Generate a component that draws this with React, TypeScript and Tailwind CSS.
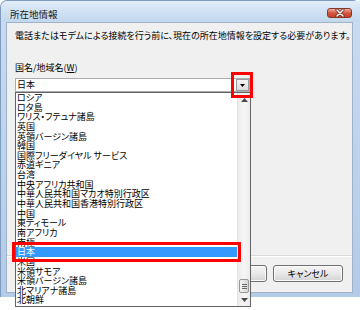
import React from "react";

const items = [
  "ロシア",
  "ロタ島",
  "ワリス・フテュナ諸島",
  "英国",
  "英領バージン諸島",
  "韓国",
  "国際フリーダイヤル サービス",
  "赤道ギニア",
  "台湾",
  "中央アフリカ共和国",
  "中華人民共和国マカオ特別行政区",
  "中華人民共和国香港特別行政区",
  "中国",
  "東ティモール",
  "南アフリカ",
  "南極",
  "日本",
  "米国",
  "米領サモア",
  "米領バージン諸島",
  "北マリアナ諸島",
  "北朝鮮",
];

function Tri({ up }: { up?: boolean }) {
  return (
    <svg width="7" height="4" viewBox="0 0 7 4">
      {up ? (
        <polygon points="0,4 7,4 3.5,0" fill="#4a4a4a" />
      ) : (
        <polygon points="0,0 7,0 3.5,4" fill="#4a4a4a" />
      )}
    </svg>
  );
}

export default function App() {
  return (
    <div className="relative w-[360px] h-[310px] overflow-hidden bg-white text-black font-['Noto_Sans_CJK_JP','Noto_Sans',sans-serif] [font-feature-settings:'palt']">
      {/* window */}
      <div className="flex flex-col w-[360px] h-[297px] rounded-t-[7px] border-l border-t border-[#7f9bbd] bg-gradient-to-b from-[#c9dcf1] to-[#b2cbe8]">
        {/* title bar */}
        <div className="flex h-[21px] shrink-0 items-start justify-between rounded-tl-[6px] bg-gradient-to-b from-[#e2edf8] via-[#d0e1f3] to-[#c3d8ee] pr-[8px]">
          <div className="mt-[7px] pl-[9px] text-[9.5px] leading-[12px] text-[#1a1a1a]">所在地情報</div>
          <div className="mt-[7px] flex h-[10px] w-[25px] items-center justify-center rounded-[3px] border border-[#8a3526] bg-gradient-to-b from-[#eab0a3] via-[#d5533c] to-[#c9452e]">
            <svg width="10" height="8" viewBox="0 0 10 8">
              <path d="M2 1 L8 7 M8 1 L2 7" stroke="#5a1c12" strokeWidth="3" strokeLinecap="round" />
              <path d="M2 1 L8 7 M8 1 L2 7" stroke="#ffffff" strokeWidth="1.6" strokeLinecap="round" />
            </svg>
          </div>
        </div>
        {/* client area */}
        <div className="ml-[5px] mr-[7px] flex h-[271px] shrink-0 flex-col border border-[#9fb2c8] bg-[#f0f0f0]">
          <p className="whitespace-nowrap pl-[8px] pt-[6px] text-[9px] leading-[13px]">
            電話またはモデムによる接続を行う前に、現在の所在地情報を設定する必要があります。
          </p>
          <div className="mt-[20px] pl-[8px] text-[9px] leading-[12px]">
            国名/地域名(<span className="underline">W</span>)
          </div>
          <div className="ml-[8px] mt-[4px] flex h-[14px] w-[235px] items-center justify-between border border-[#abadb3] bg-white">
            <span className="pl-[1px] text-[9px] leading-[12px]">日本</span>
            <div className="flex h-[12px] w-[13px] items-center justify-center border border-[#9a9a9a] bg-gradient-to-b from-[#f4f4f4] to-[#dcdcdc]">
              <svg width="5" height="3" viewBox="0 0 5 3">
                <polygon points="0,0 5,0 2.5,3" fill="#000" />
              </svg>
            </div>
          </div>
          <div className="mt-auto">
            <div className="h-px bg-[#d9d9d9]" />
            <div className="h-px bg-white" />
            <div className="mt-[8px] flex justify-end gap-[6px] pb-[10px] pr-[9px]">
              <div className="flex h-[17px] w-[70px] items-center justify-center rounded-[3px] border border-[#707070] bg-gradient-to-b from-[#f4f4f4] via-[#e9e9e9] to-[#d3d3d3] text-[9px] shadow-[inset_0_0_0_1px_#fbfbfb]">
                OK
              </div>
              <div className="flex h-[17px] w-[70px] items-center justify-center rounded-[3px] border border-[#707070] bg-gradient-to-b from-[#f4f4f4] via-[#e9e9e9] to-[#d3d3d3] text-[9px] shadow-[inset_0_0_0_1px_#fbfbfb]">
                キャンセル
              </div>
            </div>
          </div>
        </div>
      </div>

      {/* dropdown list popup */}
      <div className="absolute left-[15px] top-[92px] flex h-[215px] w-[236px] border border-[#646464] bg-white">
        <div className="flex flex-1 flex-col">
          {items.map((t, i) => (
            <div
              key={t}
              className={
                "h-[9.65px] shrink-0 whitespace-nowrap pl-[1px] text-[9px] leading-[9.65px] " +
                (i === 16 ? "bg-[#3399ff] text-white" : "")
              }
            >
              {t}
            </div>
          ))}
        </div>
        <div className="flex w-[13px] flex-col border-l border-[#e4e4e4] bg-gradient-to-r from-[#ececec] via-[#f6f6f6] to-[#ececec]">
          <div className="flex h-[13px] items-center justify-center">
            <Tri up />
          </div>
          <div className="flex flex-1 flex-col justify-end">
            <div className="mx-[1px] flex h-[14px] flex-col items-center justify-center gap-[1px] rounded-[2px] border border-[#979797] bg-gradient-to-r from-[#f4f4f4] to-[#d6d6d6]">
              <div className="h-px w-[5px] bg-[#6b6b6b]" />
              <div className="h-px w-[5px] bg-[#6b6b6b]" />
              <div className="h-px w-[5px] bg-[#6b6b6b]" />
            </div>
          </div>
          <div className="flex h-[13px] items-center justify-center">
            <Tri />
          </div>
        </div>
      </div>

      {/* red highlight boxes */}
      <div className="absolute left-[231px] top-[72px] h-[26px] w-[22px] border-[3px] border-[#ff0000]" />
      <div className="absolute left-[12px] top-[242px] h-[20px] w-[229px] border-[3px] border-[#ff0000]" />
    </div>
  );
}
